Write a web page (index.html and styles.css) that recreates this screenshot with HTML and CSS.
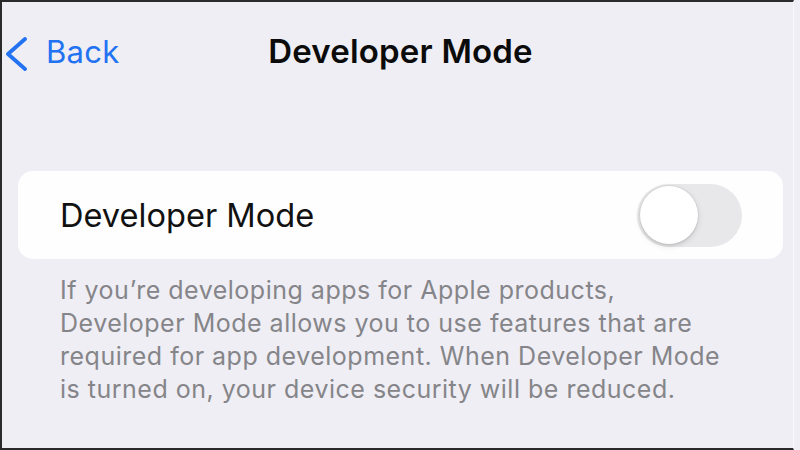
FILE: index.html
```html
<!DOCTYPE html>
<html lang="en">
<head>
<meta charset="utf-8">
<title>Developer Mode</title>
<link rel="stylesheet" href="styles.css">
</head>
<body>
<div class="screen">
  <header class="nav">
    <a class="back" href="#">
      <svg class="chev" width="24" height="34" viewBox="0 0 24 34" aria-hidden="true">
        <polyline points="21,2 4,17 21,32" fill="none" stroke="currentColor" stroke-width="3.8" stroke-linecap="round" stroke-linejoin="round"/>
      </svg>
      <span>Back</span>
    </a>
    <h1 class="title">Developer Mode</h1>
    <div class="spacer"></div>
  </header>
  <main class="content">
    <div class="card">
      <span class="label">Developer Mode</span>
      <div class="toggle"><div class="knob"></div></div>
    </div>
    <p class="footnote">If you’re developing apps for Apple products,<br>Developer Mode allows you to use features that are<br>required for app development. When Developer Mode<br>is turned on, your device security will be reduced.</p>
  </main>
</div>
</body>
</html>
```

FILE: styles.css
```css
* { box-sizing: border-box; }
html, body {
  margin: 0;
  padding: 0;
  width: 800px;
  height: 450px;
  overflow: hidden;
  background: #efeef4;
}
body {
  font-family: Inter, "Liberation Sans", sans-serif;
}
.screen {
  width: 794px;
  height: 450px;
  background: #efeef4;
  border-top: 2px solid #2a2a2c;
  border-left: 2px solid #2a2a2c;
  border-bottom: 2px solid #2a2a2c;
  border-right: 1px solid #f9f9fb;
}
.nav {
  display: grid;
  grid-template-columns: 1fr auto 1fr;
  align-items: center;
  height: 98px;
  padding-left: 2px;
}
.back {
  display: flex;
  align-items: center;
  color: #2272f2;
  text-decoration: none;
  font-size: 31px;
  letter-spacing: 0.3px;
}
.chev {
  display: block;
  margin-top: 6px;
  margin-right: 18px;
}
.title {
  margin: 0;
  font-size: 33px;
  font-weight: 600;
  color: #0b0b0c;
  letter-spacing: 0.2px;
  text-align: center;
  transform: translateX(2px);
}
.content {
  padding: 71px 10px 0 16px;
}
.card {
  display: flex;
  align-items: center;
  justify-content: space-between;
  height: 88px;
  background: #fefefe;
  border-radius: 15px;
  padding: 0 41px 0 42px;
}
.label {
  font-size: 32.6px;
  color: #111;
}
.toggle {
  width: 105px;
  height: 63px;
  border-radius: 32px;
  background: #e8e8ea;
  padding: 2.5px;
  display: flex;
  align-items: center;
}
.knob {
  width: 58px;
  height: 58px;
  border-radius: 50%;
  background: #fff;
  box-shadow: 0 0 0 1px rgba(0,0,0,0.05), 0 2px 6px rgba(0,0,0,0.12), 0 3px 1px rgba(0,0,0,0.03);
}
.footnote {
  margin: 15px 0 0 0;
  padding: 0 0 0 42px;
  font-size: 25px;
  line-height: 33px;
  letter-spacing: 0.5px;
  white-space: nowrap;
  color: #858589;
}
```
